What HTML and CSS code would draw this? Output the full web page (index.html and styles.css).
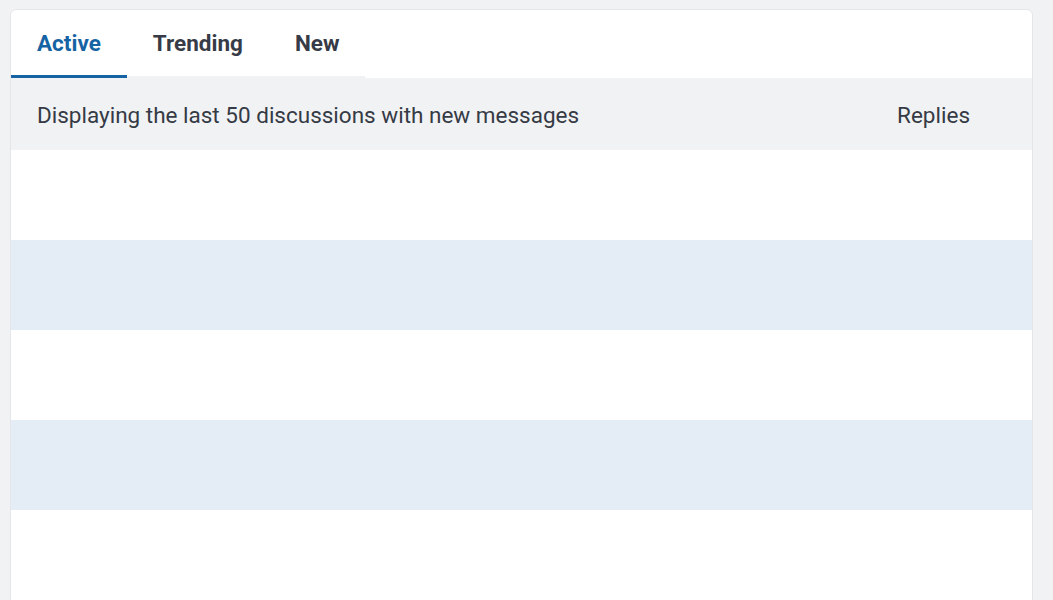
FILE: index.html
```html
<!DOCTYPE html>
<html lang="en">
<head>
<meta charset="utf-8">
<title>Discussions</title>
<link rel="stylesheet" href="styles.css">
</head>
<body>
<div class="card">
  <div class="tabs-bar">
    <ul class="tabs">
      <li class="tab active">Active</li>
      <li class="tab">Trending</li>
      <li class="tab">New</li>
    </ul>
  </div>
  <div class="list-head">
    <span class="caption">Displaying the last 50 discussions with new messages</span>
    <span class="col-replies">Replies</span>
  </div>
  <div class="rows">
    <div class="row"></div>
    <div class="row alt"></div>
    <div class="row"></div>
    <div class="row alt"></div>
    <div class="row"></div>
  </div>
</div>
</body>
</html>
```
FILE: styles.css
```css
html, body {
  margin: 0;
  padding: 0;
  background: #f1f2f4;
  height: 600px;
  overflow: hidden;
}
body {
  font-family: Roboto, "Liberation Sans", Arial, sans-serif;
  padding: 9px 0 0 10px;
}
.card {
  width: 1021px;
  background: #fff;
  border: 1px solid #e4e6ea;
  border-radius: 6px 6px 0 0;
  overflow: hidden;
}
.tabs-bar {
  height: 68px;
  display: flex;
  align-items: flex-end;
}
.tabs {
  list-style: none;
  margin: 0;
  padding: 0;
  display: flex;
  border-bottom: 2px solid #f1f2f4;
}
.tab {
  padding: 1px 26px 1px;
  height: 68px;
  display: flex;
  align-items: center;
  box-sizing: border-box;
  font-size: 22.5px;
  font-weight: 700;
  color: #363b47;
  margin-bottom: -2px;
  border-bottom: 2px solid transparent;
}
.tab.active {
  color: #1663a4;
  border-bottom: 3px solid #1663a4;
  padding-bottom: 0;
}
.list-head {
  height: 72px;
  box-sizing: border-box;
  padding: 2px 62px 0 26px;
  background: #f1f2f4;
  display: flex;
  align-items: center;
  justify-content: space-between;
  font-size: 22.5px;
  color: #353a45;
}
.row {
  height: 90px;
  background: #fff;
}
.row.alt {
  background: #e4edf5;
}
```
